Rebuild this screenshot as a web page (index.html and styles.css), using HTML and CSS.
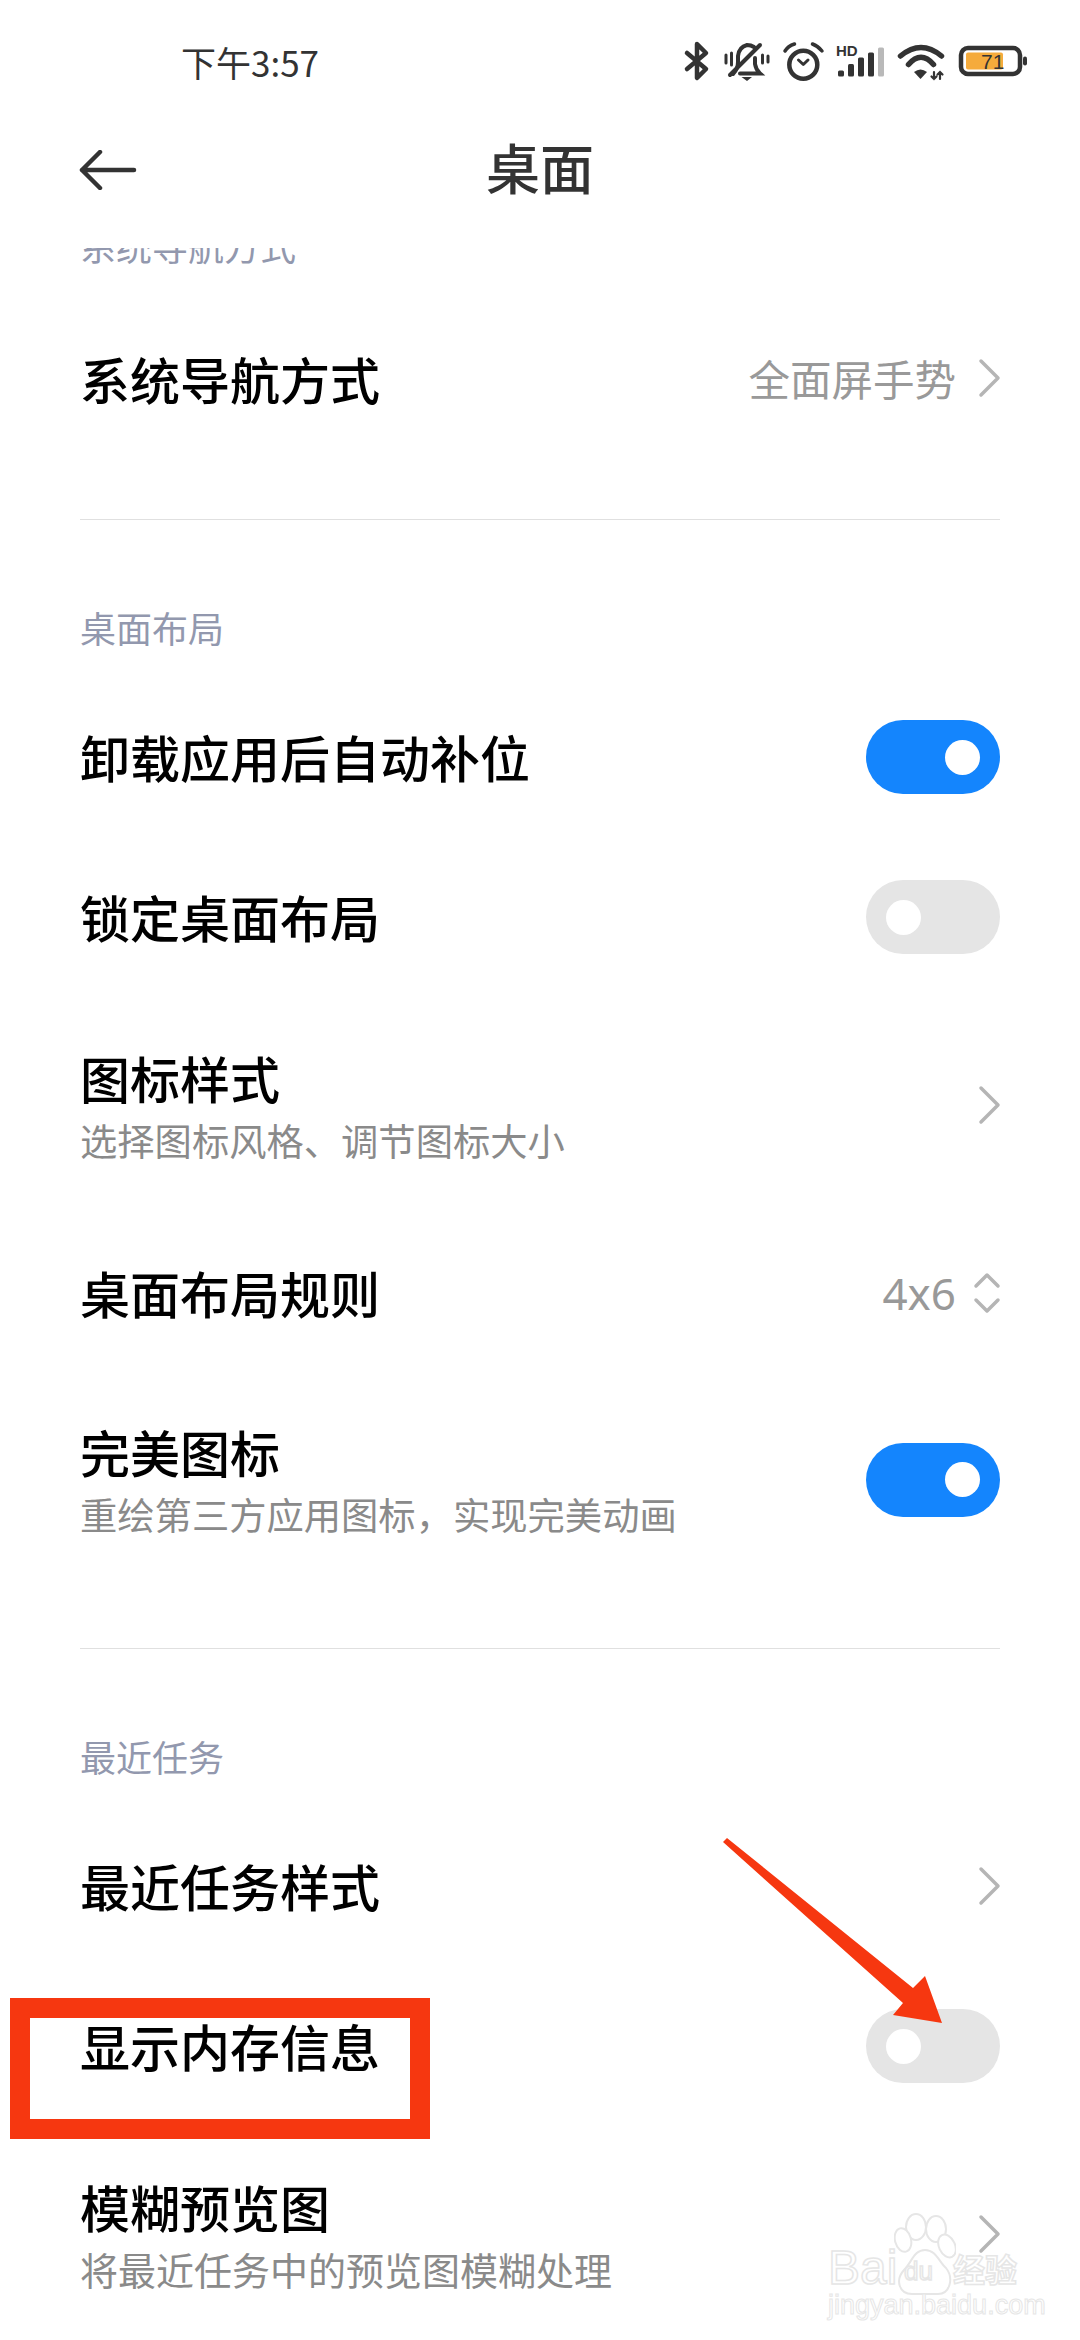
FILE: index.html
```html
<!DOCTYPE html>
<html lang="zh-CN">
<head>
    <meta charset="UTF-8">
    <meta content="width=device-width, initial-scale=1.0" name="viewport">
    <title>桌面</title>
    <link rel="stylesheet" href="styles.css">
</head>
<body>
<div class="page">
    <div class="status-bar">
        <span class="status-time">下午3:57</span>
        <div class="status-icons">
            <svg width="24" height="40" viewBox="0 0 24 40" fill="none" stroke="#333" stroke-width="4.500" stroke-linejoin="round" stroke-linecap="round">
                <path d="M2 11 L21 27 L12 36 V2 L21 11 L2 27"/>
            </svg>
            <svg width="46" height="40" viewBox="0 0 46 40" fill="none" stroke="#333" stroke-width="4" stroke-linecap="round">
                <path d="M3 13 V21 M8.500 11 V23 M39.500 13 V21 M45 14 V20" stroke-width="3"/>
                <path d="M10 32 Q15 27 15 20 V14 Q16 5 24 3 Q28 3 31 5"/>
                <path d="M17 31.500 H37 Q33 28 32 22 V16"/>
                <path d="M7 33 L37 3"/>
                <path d="M18.500 35 H29 L24 39 Z" fill="#333" stroke="none"/>
            </svg>
            <svg width="40" height="40" viewBox="0 0 40 40" fill="none" stroke="#333" stroke-width="4.500" stroke-linecap="round" stroke-linejoin="round">
                <circle cx="20.300" cy="22.700" r="14"/>
                <path d="M15.500 18 L20.300 22.500 L25 18" stroke-width="3"/>
                <path d="M2 9 Q5 4 11.500 2 M29.500 2 Q35 4 39 9" stroke-width="3.500"/>
            </svg>
            <svg width="47" height="40" viewBox="0 0 47 40">
                <text class="signal-hd" x="-1" y="14">HD</text>
                <rect x="1" y="28.500" width="6" height="6" rx="1.500" fill="#333"/>
                <rect x="11" y="22" width="6" height="12.500" rx="1.500" fill="#333"/>
                <rect x="21" y="15.500" width="6" height="19" rx="1.500" fill="#333"/>
                <rect x="31" y="10.500" width="6" height="24" rx="1.500" fill="#333"/>
                <rect x="41" y="5.500" width="6" height="29" rx="1.500" fill="#b9b9b9"/>
            </svg>
            <svg width="45" height="40" viewBox="0 0 45 40" fill="none" stroke="#333" stroke-linecap="round">
                <path d="M2.500 14 Q23 -3 43.500 14" stroke-width="5.500"/>
                <path d="M10.500 22.500 Q23 8 35.500 22.500" stroke-width="5.500"/>
                <path d="M16 30 Q22.500 25 29 30 L22.500 37 Z" fill="#333" stroke="none"/>
                <path d="M36 30 V37 M33.500 34.500 L36 37 L38.500 34.500 M42 37 V30 M39.500 32.500 L42 30 L44.500 32.500" stroke-width="2.200"/>
            </svg>
            <svg width="70" height="40" viewBox="0 0 70 40">
                <rect x="4" y="6" width="59" height="26" rx="7" fill="none" stroke="#333" stroke-width="4.500"/>
                <rect x="9" y="10.500" width="37" height="17" rx="2" fill="#f5ab3c"/>
                <rect x="66" y="14.500" width="4" height="9" rx="2" fill="#333"/>
                <text class="battery-level" x="24" y="27">71</text>
            </svg>
        </div>
    </div>

    <div class="nav-bar">
        <svg class="nav-back" width="60" height="40" viewBox="0 0 60 40" fill="none" stroke="#333" stroke-width="4.500" stroke-linecap="round" stroke-linejoin="round">
            <path d="M55 20 H3 M21 2 L3 20 L21 38"/>
        </svg>
        <h1 class="nav-title">桌面</h1>
    </div>

    <div class="scrolled-label"><span>系统导航方式</span></div>

    <div class="row row-first">
        <div class="row-title">系统导航方式</div>
        <div class="row-right">
            <span class="row-value">全面屏手势</span>
            <svg class="chevron" width="24" height="40" viewBox="0 0 24 40"><path d="M5 3 L22 20 L5 37"/></svg>
        </div>
    </div>

    <div class="divider divider-a"></div>
    <div class="section-label">桌面布局</div>

    <div class="row">
        <div class="row-title">卸载应用后自动补位</div>
        <div class="toggle toggle-on"><i></i></div>
    </div>
    <div class="row">
        <div class="row-title">锁定桌面布局</div>
        <div class="toggle"><i></i></div>
    </div>
    <div class="row row-tall">
        <div class="row-text">
            <div class="row-title">图标样式</div>
            <div class="row-sub">选择图标风格、调节图标大小</div>
        </div>
        <svg class="chevron" width="24" height="40" viewBox="0 0 24 40"><path d="M5 3 L22 20 L5 37"/></svg>
    </div>
    <div class="row">
        <div class="row-title">桌面布局规则</div>
        <div class="row-right">
            <span class="row-value row-number">4x6</span>
            <svg class="chevron" width="24" height="40" viewBox="0 0 24 40"><path d="M0 13 L11 2 L22 13 M0 27 L11 38 L22 27"/></svg>
        </div>
    </div>
    <div class="row row-tall row-short">
        <div class="row-text">
            <div class="row-title">完美图标</div>
            <div class="row-sub">重绘第三方应用图标，实现完美动画</div>
        </div>
        <div class="toggle toggle-on"><i></i></div>
    </div>

    <div class="divider divider-b"></div>
    <div class="section-label">最近任务</div>

    <div class="row">
        <div class="row-title">最近任务样式</div>
        <svg class="chevron" width="24" height="40" viewBox="0 0 24 40"><path d="M5 3 L22 20 L5 37"/></svg>
    </div>
    <div class="row">
        <div class="row-title">显示内存信息</div>
        <div class="toggle"><i></i></div>
    </div>
    <div class="row row-tall">
        <div class="row-text">
            <div class="row-title">模糊预览图</div>
            <div class="row-sub row-sub-wide">将最近任务中的预览图模糊处理</div>
        </div>
        <svg class="chevron" width="24" height="40" viewBox="0 0 24 40"><path d="M5 3 L22 20 L5 37"/></svg>
    </div>

    <!-- annotations on top of the screenshot -->
    <div class="mark-box"></div>
    <svg class="mark-arrow" width="1080" height="2340" viewBox="0 0 1080 2340">
        <polygon points="723,1842 727,1838 913,1988 925,1976 942,2023 893,2015 903,2003"/>
    </svg>

    <div class="watermark">
        <span class="wm-bai">Bai</span>
        <svg class="wm-paw" width="62" height="92" viewBox="0 0 62 92" fill="#fff" stroke="#e6e6e6" stroke-width="2">
            <ellipse cx="22" cy="15" rx="10" ry="13"/>
            <ellipse cx="42" cy="17" rx="10" ry="13"/>
            <ellipse cx="9" cy="28" rx="8" ry="12" transform="rotate(-15 9 28)"/>
            <ellipse cx="53" cy="34" rx="8" ry="12" transform="rotate(-25 53 34)"/>
            <path d="M31 38 C42 38 45 50 52 56 C60 66 56 82 44 82 H18 C5 82 1 68 10 58 C18 50 20 38 31 38 Z"/>
        </svg>
        <span class="wm-du">du</span>
        <span class="wm-jy">经验</span>
        <span class="wm-url">jingyan.baidu.com</span>
    </div>
</div>
</body>
</html>
```

FILE: styles.css
```css
body {
    margin: 0;
    padding: 0;
    background: #fff;
    font-family: "Noto Sans CJK SC", "Noto Sans", sans-serif;
}

.page {
    position: relative;
    width: 1080px;
    height: 2340px;
    overflow: hidden;
    background: #fff;
}

.status-bar {
    display: flex;
    align-items: center;
    justify-content: space-between;
    height: 44px;
    padding: 40px 53px 0 181px;
}

.status-time {
    font-size: 35px;
    color: #333;
    line-height: 44px;
}

.status-icons {
    display: flex;
    align-items: center;
    gap: 14px;
}

.status-icons svg {
    overflow: visible;
}

.signal-hd {
    font-family: "Liberation Sans", sans-serif;
    font-weight: 700;
    font-size: 15px;
    fill: #333;
}

.battery-level {
    font-family: "Liberation Sans", sans-serif;
    font-size: 21px;
    fill: #333;
}

.nav-bar {
    display: flex;
    align-items: center;
    justify-content: center;
    position: relative;
    height: 164px;
}

.nav-back {
    position: absolute;
    left: 79px;
    top: 66px;
}

.nav-title {
    margin: 2px 0 0;
    font-size: 54px;
    font-weight: 500;
    color: #333;
    line-height: 70px;
}

/* label cut off by the title bar while scrolling */
.scrolled-label {
    height: 22px;
    margin: 0 80px;
    overflow: hidden;
}

.scrolled-label span {
    display: block;
    margin-top: -28px;
    font-size: 36px;
    line-height: 50px;
    color: #9298ae;
}

.row {
    display: flex;
    align-items: center;
    justify-content: space-between;
    height: 160px;
    padding: 0 80px;
}

.row-first {
    margin-top: 28px;
}

.row-tall {
    height: 216px;
}

.row-short {
    height: 213px;
}

.row-title {
    font-size: 50px;
    font-weight: 500;
    line-height: 66px;
    color: #000;
}

.row > .row-title {
    margin-bottom: 2px;
}

.row-first > .row-title {
    margin-bottom: 0;
}

.row-text {
    padding-top: 3px;
}

.row-sub {
    font-size: 37.300px;
    line-height: 60px;
    color: #8a8a8a;
}

.row-sub-wide {
    font-size: 38px;
}

.row-right {
    display: flex;
    align-items: center;
    gap: 20px;
}

.row-value {
    font-size: 41.500px;
    color: #999;
}

.row-number {
    font-family: "Noto Sans", sans-serif;
    font-size: 44px;
}

.chevron {
    display: block;
    overflow: visible;
    fill: none;
    stroke: #b5b5b5;
    stroke-width: 3.500;
    stroke-linecap: round;
    stroke-linejoin: round;
}

.toggle {
    display: flex;
    align-items: center;
    justify-content: flex-start;
    width: 134px;
    height: 74px;
    padding: 0 20px;
    box-sizing: border-box;
    border-radius: 37px;
    background: #e5e5e5;
}

.toggle i {
    display: block;
    width: 35px;
    height: 35px;
    border-radius: 50%;
    background: #fff;
}

.toggle-on {
    justify-content: flex-end;
    background: #1485fd;
}

.divider {
    height: 1px;
    margin: 0 80px;
    background: #e0e0e0;
}

.divider-a {
    margin-top: 61px;
}

.divider-b {
    margin-top: 62px;
}

.section-label {
    height: 50px;
    margin: 82px 80px 25px;
    font-size: 36px;
    line-height: 50px;
    color: #9298ae;
}

.mark-box {
    position: absolute;
    left: 10px;
    top: 1998px;
    width: 380px;
    height: 101px;
    border: 20px solid #f63710;
}

.mark-arrow {
    position: absolute;
    left: 0;
    top: 0;
    fill: #f63710;
}

.watermark {
    position: absolute;
    left: 826px;
    top: 2222px;
    width: 200px;
    height: 100px;
    color: #fff;
    -webkit-text-stroke: 1.500px #e6e6e6;
}

.wm-bai {
    position: absolute;
    left: 2px;
    top: 22px;
    font-family: "Liberation Sans", sans-serif;
    font-size: 48px;
    line-height: 48px;
}

.wm-paw {
    position: absolute;
    left: 68px;
    top: -10px;
}

.wm-du {
    position: absolute;
    left: 78px;
    top: 36px;
    font-family: "Liberation Sans", sans-serif;
    font-size: 26px;
    line-height: 26px;
}

.wm-jy {
    position: absolute;
    left: 127px;
    top: 24px;
    font-size: 32px;
    line-height: 44px;
    font-weight: 700;
}

.wm-url {
    position: absolute;
    left: 2px;
    top: 68px;
    font-family: "Liberation Sans", sans-serif;
    font-size: 27px;
    line-height: 30px;
    -webkit-text-stroke-width: 1px;
    white-space: nowrap;
}
```
